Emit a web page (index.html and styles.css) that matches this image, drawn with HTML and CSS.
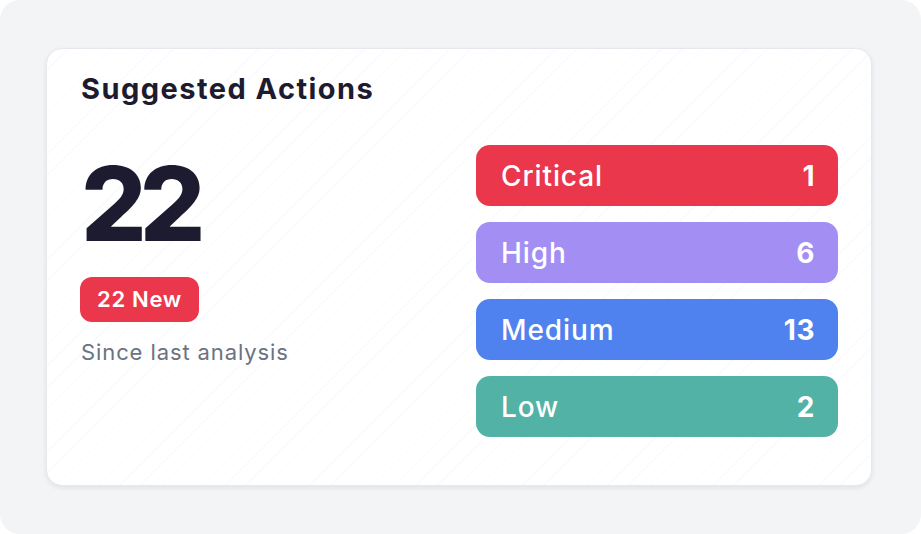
FILE: index.html
```html
<!DOCTYPE html>
<html>
<head>
<meta charset="utf-8">
<link rel="stylesheet" href="styles.css">
</head>
<body>
<div class="frame">
  <div class="card">
    <h2 class="title">Suggested Actions</h2>
    <div class="content">
      <div class="summary">
        <div class="total">22</div>
        <span class="badge">22 New</span>
        <div class="since">Since last analysis</div>
      </div>
      <div class="bars">
        <div class="bar critical"><span>Critical</span><span class="num">1</span></div>
        <div class="bar high"><span>High</span><span class="num">6</span></div>
        <div class="bar medium"><span>Medium</span><span class="num">13</span></div>
        <div class="bar low"><span>Low</span><span class="num">2</span></div>
      </div>
    </div>
  </div>
</div>
</body>
</html>
```
FILE: styles.css
```css
html, body {
  margin: 0;
  padding: 0;
  background: #ffffff;
}
body {
  font-family: Inter, "Noto Sans", sans-serif;
}
.frame {
  width: 921px;
  height: 534px;
  box-sizing: border-box;
  background: #f3f4f6;
  border-radius: 20px;
  padding: 48px 49px 48px 46px;
}
.card {
  box-sizing: border-box;
  height: 438px;
  background-color: #ffffff;
  background-image: repeating-linear-gradient(135deg, rgba(236, 241, 250, 0) 0px, rgba(236, 241, 250, 0) 14px, rgba(236, 241, 250, 0.32) 14px, rgba(236, 241, 250, 0.32) 15px);
  border: 1px solid #e6e8ee;
  border-radius: 16px;
  box-shadow: 0 2px 5px rgba(15, 23, 42, 0.08);
  padding: 21px 33px 0 34px;
}
.title {
  margin: 0;
  font-size: 29px;
  font-weight: 700;
  line-height: 38px;
  letter-spacing: 1.45px;
  color: #1d1b2f;
}
.content {
  display: grid;
  grid-template-columns: 1fr 362px;
  margin-top: 37px;
}
.summary {
  display: flex;
  flex-direction: column;
  align-items: flex-start;
}
.total {
  font-size: 103px;
  font-weight: 800;
  line-height: 100px;
  letter-spacing: -7px;
  color: #1d1b2f;
  margin-top: 9px;
}
.badge {
  margin-top: 23px;
  background: #eb374c;
  color: #ffffff;
  font-size: 22px;
  font-weight: 600;
  line-height: 45px;
  letter-spacing: 0.7px;
  padding: 0 17px;
  border-radius: 12px;
  margin-left: -1px;
}
.since {
  margin-top: 15px;
  font-size: 22px;
  line-height: 30px;
  letter-spacing: 0.9px;
  color: #6b7280;
}
.bars {
  display: flex;
  flex-direction: column;
  gap: 16px;
}
.bar {
  height: 61px;
  border-radius: 14px;
  display: flex;
  align-items: center;
  justify-content: space-between;
  padding: 0 23px 0 25px;
  color: #ffffff;
  font-size: 28px;
  font-weight: 500;
  letter-spacing: 0.9px;
}
.bar .num {
  font-weight: 700;
  letter-spacing: 0.5px;
}
.critical { background: #ea374b; }
.high { background: #a38ef3; }
.medium { background: #4f82ee; }
.low { background: #53b2a6; }
```
